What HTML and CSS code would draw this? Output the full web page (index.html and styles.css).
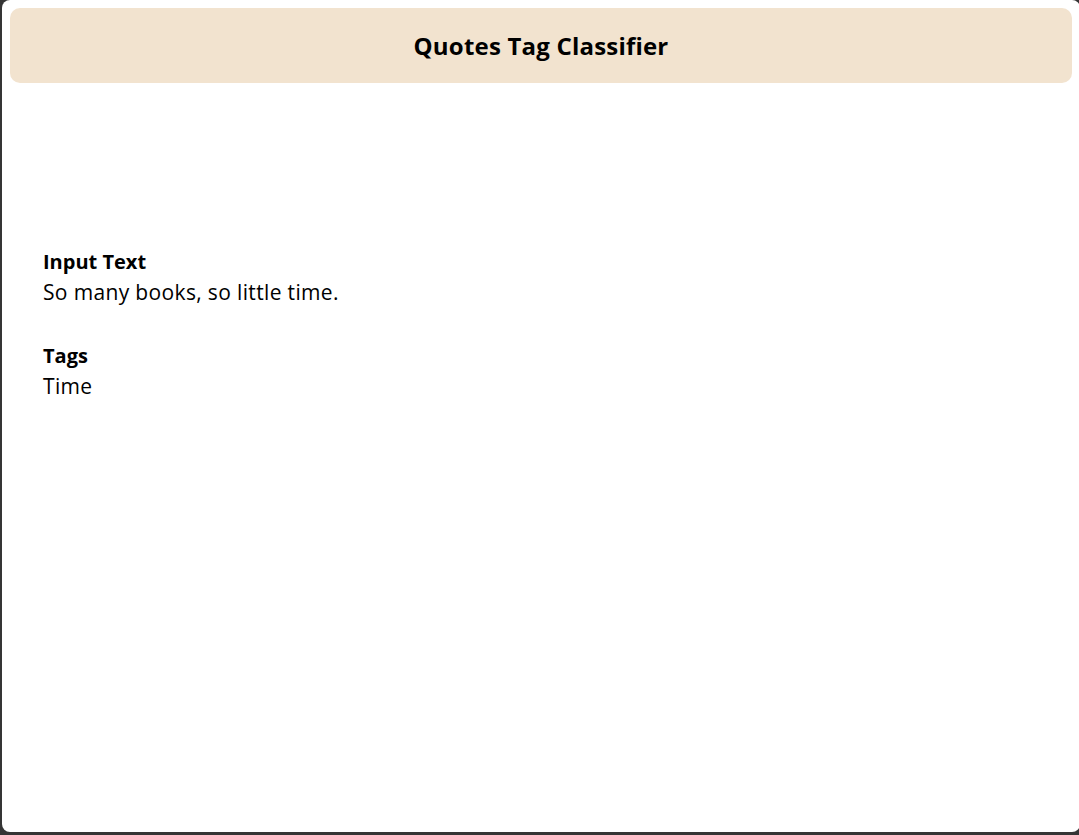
FILE: index.html
```html
<!DOCTYPE html>
<html>
<head>
<meta charset="utf-8">
<link rel="stylesheet" href="styles.css">
</head>
<body>
<div class="panel">
  <header class="header"><h1 class="title">Quotes Tag Classifier</h1></header>
  <main class="content">
    <section class="field">
      <div class="label">Input Text</div>
      <div class="value">So many books, so little time.</div>
    </section>
    <section class="field">
      <div class="label">Tags</div>
      <div class="value">Time</div>
    </section>
  </main>
</div>
</body>
</html>
```
FILE: styles.css
```css
html, body {
  margin: 0;
  padding: 0;
  background: #353535;
}
body {
  font-family: "Open Sans", Lato, sans-serif;
  color: #000;
}
.panel {
  box-sizing: border-box;
  width: 1078px;
  height: 832px;
  margin: 0 0 0 2px;
  background: #fff;
  border-radius: 8px;
  padding: 8px;
}
.header {
  height: 75px;
  background: #f2e3cf;
  border-radius: 10px;
  display: flex;
  align-items: center;
  justify-content: center;
}
.title {
  margin: 0;
  font-size: 24px;
  font-weight: 700;
  letter-spacing: 0.2px;
}
.content {
  padding: 163px 0 0 33px;
}
.field {
  margin-bottom: 32px;
}
.label {
  font-weight: 700;
  font-size: 20px;
  line-height: 31px;
}
.value {
  font-size: 21px;
  line-height: 31px;
  letter-spacing: 0.35px;
}
```
